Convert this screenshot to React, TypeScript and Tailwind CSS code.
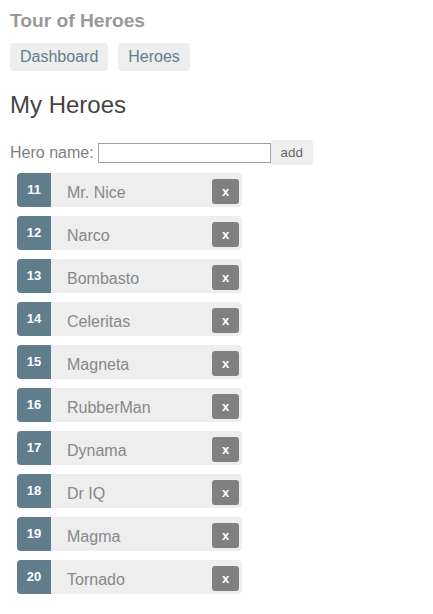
import React from "react";

const heroes = [
  { id: 11, name: "Mr. Nice" },
  { id: 12, name: "Narco" },
  { id: 13, name: "Bombasto" },
  { id: 14, name: "Celeritas" },
  { id: 15, name: "Magneta" },
  { id: 16, name: "RubberMan" },
  { id: 17, name: "Dynama" },
  { id: 18, name: "Dr IQ" },
  { id: 19, name: "Magma" },
  { id: 20, name: "Tornado" },
];

export default function App() {
  return (
    <div className="min-h-screen bg-white px-[10px] pt-[10px] font-['Liberation_Sans',Arial,sans-serif]">
      <h1 className="text-[19.2px] font-bold leading-[22px] text-[#999]">Tour of Heroes</h1>
      <nav className="mt-[11px] flex gap-[10px]">
        <a className="rounded-[4px] bg-[#eee] px-[10px] py-[5px] text-[16px] leading-[18px] text-[#607D8B]">Dashboard</a>
        <a className="rounded-[4px] bg-[#eee] px-[10px] py-[5px] text-[16px] leading-[18px] text-[#607D8B]">Heroes</a>
      </nav>
      <h2 className="mt-[20px] text-[24px] leading-[28px] text-[#444]">My Heroes</h2>
      <div className="mt-[21px] flex items-center">
        <span className="text-[16px] leading-[18px] text-[#808080]">Hero name:</span>
        <input
          type="text"
          className="ml-[4px] h-[20px] w-[173px] border border-[#a0a0a0] bg-white outline-none"
        />
        <button className="h-[25px] rounded-[4px] bg-[#eee] px-[10px] text-[13.33px] text-[#666]">add</button>
      </div>
      <ul className="mt-[8px] ml-[7px] flex w-[225px] flex-col gap-[9px]">
        {heroes.map((h) => (
          <li key={h.id} className="flex h-[34px] items-stretch rounded-[4px] bg-[#eee]">
            <span className="flex w-[34px] items-center justify-center rounded-l-[4px] bg-[#607D8B] text-[13px] font-bold text-white">
              {h.id}
            </span>
            <span className="ml-[16px] flex flex-1 items-center pt-[6px] text-[16px] text-[#888]">{h.name}</span>
            <span className="mr-[3px] mt-[6px] flex h-[25px] w-[27px] items-center justify-center rounded-[3px] bg-[#808080] text-[13px] font-bold text-white">
              x
            </span>
          </li>
        ))}
      </ul>
    </div>
  );
}
